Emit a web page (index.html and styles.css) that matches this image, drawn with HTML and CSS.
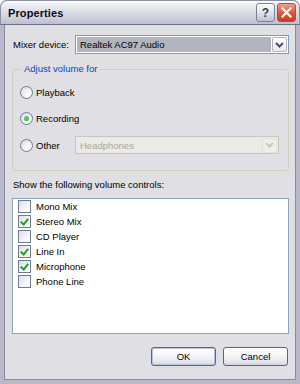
FILE: index.html
```html
<!DOCTYPE html>
<html>
<head>
<meta charset="utf-8">
<link rel="stylesheet" href="styles.css">
</head>
<body>
<div class="window">
  <div class="titlebar">
    <span class="title">Properties</span>
    <div class="tbtns">
      <span class="tb help">?</span>
      <span class="tb close"><svg width="11" height="11" viewBox="0 0 11 11"><path d="M1.5 1.5 L9.5 9.5 M9.5 1.5 L1.5 9.5" stroke="#fff" stroke-width="2.2" stroke-linecap="square"/></svg></span>
    </div>
  </div>
  <div class="client">
    <div class="mixer-row">
      <span class="label">Mixer device:</span>
      <div class="combo">
        <span class="combo-text selected">Realtek AC97 Audio</span>
        <span class="drop"><svg width="9" height="6" viewBox="0 0 9 6"><path d="M1 1 L4.5 4.5 L8 1" fill="none" stroke="#4d5266" stroke-width="2"/></svg></span>
      </div>
    </div>
    <fieldset class="group">
      <legend>Adjust volume for</legend>
      <div class="radio-row"><span class="radio"></span><span>Playback</span></div>
      <div class="radio-row"><span class="radio checked"></span><span>Recording</span></div>
      <div class="radio-row other">
        <div class="radio-opt"><span class="radio"></span><span>Other</span></div>
        <div class="combo disabled">
          <span class="combo-text">Headphones</span>
          <span class="drop"><svg width="9" height="6" viewBox="0 0 9 6"><path d="M1 1 L4.5 4.5 L8 1" fill="none" stroke="#c9c7ba" stroke-width="2"/></svg></span>
        </div>
      </div>
    </fieldset>
    <div class="caption">Show the following volume controls:</div>
    <div class="listbox">
      <div class="item"><span class="check"></span><span>Mono Mix</span></div>
      <div class="item"><span class="check on"></span><span>Stereo Mix</span></div>
      <div class="item"><span class="check"></span><span>CD Player</span></div>
      <div class="item"><span class="check on"></span><span>Line In</span></div>
      <div class="item"><span class="check on"></span><span>Microphone</span></div>
      <div class="item"><span class="check"></span><span>Phone Line</span></div>
    </div>
    <div class="buttons">
      <button class="btn default">OK</button>
      <button class="btn">Cancel</button>
    </div>
  </div>
</div>
</body>
</html>
```

FILE: styles.css
```css
* { box-sizing: border-box; }
html, body { margin: 0; padding: 0; background: #fff; }
body { font-family: "Liberation Sans", Arial, sans-serif; font-size: 9.5px; color: #000; }

.window {
  width: 300px;
  height: 384px;
  display: flex;
  flex-direction: column;
  background: #8585a0;
  border-radius: 7px 7px 0 0;
  overflow: hidden;
}

.titlebar {
  height: 25px;
  flex: none;
  display: flex;
  align-items: center;
  justify-content: space-between;
  padding: 0 3px 1px 7px;
  background: linear-gradient(#ffffff 0%, #eceef4 15%, #dcdde6 45%, #c9cad8 80%, #b9bacb 100%);
  border: 1px solid #8e8ea6;
  border-bottom: none;
  border-radius: 7px 7px 0 0;
}
.title { font-weight: bold; font-size: 11px; color: #0c0c18; letter-spacing: 0.1px; }
.tbtns { display: flex; gap: 2px; }
.tb {
  width: 19px; height: 19px;
  border-radius: 3px;
  display: flex; align-items: center; justify-content: center;
}
.help {
  border: 1px solid #7e809a;
  background: linear-gradient(#fdfdfe, #dcdee8 60%, #bfc2d2);
  color: #3c4052; font-weight: bold; font-size: 12px;
}
.close {
  border: 1px solid #b44a3a;
  background: linear-gradient(#f3a08c, #e2583e 50%, #cc3a26);
}

.client {
  flex: 1;
  display: flex;
  flex-direction: column;
  background: #e0dfe3;
  border-style: solid;
  border-width: 0 4px 4px 4px;
  border-color: #b8b8c8;
  box-shadow: inset 1px 0 #8a8aa2, inset -1px 0 #8a8aa2, inset 0 -1px #8a8aa2;
  padding: 10px 7px 0 8px;
  outline: 1px solid #6f6f88;
}

.mixer-row { display: flex; align-items: center; height: 19px; }
.label { width: 63px; padding-left: 1px; }

.combo {
  flex: 1;
  height: 19px;
  display: flex;
  align-items: center;
  border: 1px solid #7f9db9;
  background: #fff;
  padding: 1px;
  gap: 1px;
}
.combo-text { flex: 1; height: 100%; display: flex; align-items: center; padding-left: 3px; }
.combo-text.selected { background: #b2b4bf; }
.drop {
  width: 15px; height: 15px;
  display: flex; align-items: center; justify-content: center;
  border: 1px solid #b1b4c4;
  border-radius: 2px;
  background: linear-gradient(#ffffff, #e6e7ee);
}

.group {
  margin: 9px 0 0 0;
  border: 1px solid #d0d0bf;
  border-radius: 3px;
  padding: 7px 0 15px 7px;
  min-width: 0;
}
.group legend {
  color: #0046d5;
  padding: 0 2px;
  margin-left: 2px;
  line-height: 12px;
}
.radio-row { display: flex; align-items: center; gap: 3px; height: 20px; margin-bottom: 6px; }
.radio-row.other { margin-bottom: 0; margin-top: 7px; gap: 0; padding-right: 9px; }
.radio-opt { display: flex; align-items: center; gap: 3px; width: 55px; }
.radio {
  width: 13px; height: 13px; border-radius: 50%;
  border: 1px solid #6e7b95;
  background: radial-gradient(circle at 65% 70%, #ffffff 0%, #f2f2f4 40%, #d6d6de 100%);
  display: flex; align-items: center; justify-content: center;
  flex: none;
}
.radio.checked::after {
  content: "";
  width: 5px; height: 5px; border-radius: 50%;
  background: radial-gradient(circle at 40% 40%, #6cd86a, #21a121);
}
.combo.disabled {
  flex: 1;
  height: 18px;
  border-color: #c9c7ba;
  background: #ebeae6;
  color: #aca899;
}
.combo.disabled .drop {
  border-color: #e2e1da;
  background: #efeee8;
}

.caption { margin-top: 8px; height: 12px; line-height: 12px; padding-left: 1px; }

.listbox {
  margin-top: 7px;
  height: 136px;
  border: 1px solid #8ea4bd;
  background: #fff;
  padding: 0 0 0 5px;
}
.item { display: flex; align-items: center; gap: 5px; height: 15px; }
.check {
  width: 13px; height: 13px;
  border: 1px solid #6e7b95;
  background: linear-gradient(135deg, #dcdce2, #f6f6f8 60%, #ffffff);
  position: relative;
  flex: none;
}
.check.on::after {
  content: "";
  position: absolute;
  left: 3px; top: 1px;
  width: 3px; height: 6px;
  border: solid #21a121;
  border-width: 0 2px 2px 0;
  transform: rotate(40deg);
}

.buttons { display: flex; justify-content: flex-end; gap: 7px; margin-top: 13px; padding-right: 1px; }
.btn {
  width: 65px; height: 19px;
  font-family: inherit; font-size: 9.5px; color: #000;
  border: 1px solid #5b6478;
  border-radius: 3px;
  background: linear-gradient(#ffffff 0%, #f4f4f6 50%, #e3e4ea 85%, #cfd2de 100%);
  padding: 0;
}
.btn.default { box-shadow: inset 0 0 0 1px #b9c3dc; }
```
